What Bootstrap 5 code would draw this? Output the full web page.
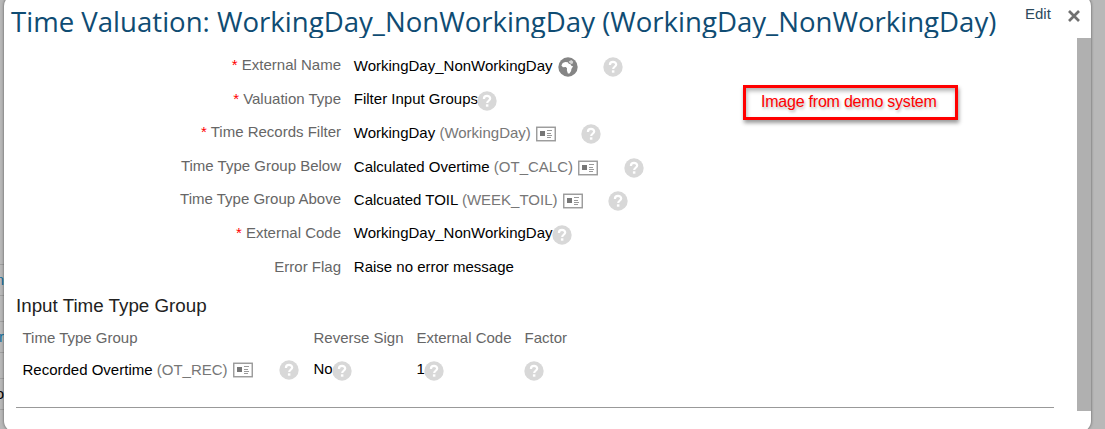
<!DOCTYPE html>
<html lang="en">
<head>
  <meta charset="UTF-8">
  <meta name="viewport" content="width=device-width, initial-scale=1">
  <title>Time Valuation</title>
  <link href="https://cdn.jsdelivr.net/npm/bootstrap@5.3.0/dist/css/bootstrap.min.css" rel="stylesheet">
  <style>
    body {
      background-color: #b8b8b8;
      font-family: "Liberation Sans", Arial, sans-serif;
      font-size: 15px;
      line-height: 20px;
      color: #000;
      height: 429px;
      overflow: hidden;
    }
    .page-behind {
      width: 4px;
      padding-top: 264px;
      overflow: hidden;
      line-height: 30px;
    }
    .page-behind div {
      height: 31px;
      border-top: 1px solid #a0a0a0;
      direction: rtl;
      white-space: nowrap;
    }
    .page-behind .gap-row {
      height: 26px;
    }
    .dialog-box {
      width: 1087px;
      height: 437px;
      margin-top: -5px;
      padding-top: 5px;
      background: #fff;
      border-radius: 11px;
      box-shadow: 0 0 3px rgba(0, 0, 0, 0.55);
    }
    .dialog-head {
      height: 38px;
    }
    .dialog-title {
      width: 1015px;
      height: 38px;
      padding-left: 7px;
      overflow: hidden;
      white-space: nowrap;
      font-family: "Open Sans", sans-serif;
      font-size: 27.58px;
      font-weight: 400;
      line-height: 44px;
      color: #0f4c73;
    }
    .edit-link {
      width: 26px;
      margin: 4px 17px 0 6px;
      color: #2c4a5c;
    }
    .close-x {
      margin-top: 10px;
    }
    .dialog-body {
      height: 373px;
    }
    .track {
      width: 14px;
      background: #b0b0b0;
    }
    .field-list {
      padding-top: 17px;
    }
    .field-row {
      height: 33.6px;
      white-space: nowrap;
    }
    .field-label {
      width: 337px;
      margin-right: 12.8px;
      color: #666;
    }
    .field-value {
      padding-top: 1px;
    }
    .req {
      color: #f00;
    }
    .code {
      color: #777;
    }
    .help-icon {
      margin: 2px 0 0 -1px;
    }
    .globe-icon {
      margin: 2px 0 0 5px;
    }
    .help-far {
      margin: 2px 0 0 25.5px;
    }
    .card-link {
      margin: 4px 0 0 5px;
    }
    .section-title {
      margin: 4px 0 0 12px;
      font-size: 18.8px;
      font-weight: 400;
      line-height: 24px;
      color: #222;
    }
    .group-table {
      width: 580px;
      margin: 9px 0 0 18.5px;
    }
    .group-table th {
      height: 22px;
      padding: 0;
      font-weight: 400;
      color: #666;
    }
    .group-table td {
      height: 42px;
      padding: 0;
    }
    .bottom-line {
      width: 1038px;
      margin: 16px 0 0 12px;
      border-top: 1px solid #999;
    }
    .note-box {
      position: absolute;
      left: 743px;
      top: 85px;
      width: 215px;
      height: 35px;
      padding: 4px 0 0 15px;
      border: 3px solid #f00;
      box-shadow: 1px 3px 4px rgba(0, 0, 0, 0.4), inset 1px 3px 4px rgba(0, 0, 0, 0.3);
      color: #f00;
      font-size: 16px;
      letter-spacing: -0.22px;
      line-height: 20px;
      white-space: nowrap;
      text-shadow: 1px 2px 3px rgba(0, 0, 0, 0.3);
    }
    svg {
      display: block;
      flex: none;
    }
  </style>
</head>
<body>

  <!-- shared icons -->
  <svg width="0" height="0" class="position-absolute">
    <symbol id="help" viewBox="0 0 20 20">
      <circle cx="10" cy="10" r="9.7" fill="#d8d8d8"/>
      <path d="M6.9 7.9C6.9 5.8 8.2 4.8 10 4.8s3.2 1 3.2 2.7c0 2.2-3 2.3-3 4.5" fill="none" stroke="#fff" stroke-width="2.2"/>
      <rect x="8.9" y="13.3" width="2.5" height="2.4" fill="#fff"/>
    </symbol>
    <symbol id="card-icon" viewBox="0 0 20 16">
      <rect x=".75" y="1.25" width="18.5" height="13.5" fill="#fff" stroke="#999" stroke-width="1.4"/>
      <rect x="4" y="5" width="5" height="5" fill="#777"/>
      <path d="M11 4.5h5M11 7.5h4M11 9.5h5M11 11.5h4" stroke="#999" stroke-width="1"/>
    </symbol>
    <symbol id="globe" viewBox="0 0 20 20">
      <circle cx="10" cy="10" r="9.7" fill="#858585"/>
      <path d="M3.4 8.6L4.7 6l2.6-1.1 2.5.4 1 1.5 1.7.5 1.1 1.8 1.5.2-1.7 2.6-.3 2.2-1.6 2.4-1.6.1-1-3 .1-2.4-1.2-1.1-2.9.1z" fill="#fff"/>
      <path d="M10.7 4.4l2.6-1.3 1.9 1.3-.4 2.1-1.7.4-1.6-1.2z" fill="#d5d5d5"/>
    </symbol>
  </svg>

  <div class="d-flex">
    <div class="page-behind">
      <div style="color: #14709e">n</div>
      <div class="gap-row"></div>
      <div style="color: #14709e">r</div>
      <div class="gap-row"></div>
      <div>o</div>
      <div></div>
    </div>

    <div class="dialog-box">
      <div class="dialog-head d-flex align-items-start">
        <h1 class="dialog-title mb-0">Time Valuation: WorkingDay_NonWorkingDay (WorkingDay_NonWorkingDay)</h1>
        <a class="edit-link text-decoration-none" href="#">Edit</a>
        <svg class="close-x" width="12" height="12" viewBox="0 0 12 12"><path d="M1 1l10 10M11 1L1 11" stroke="#707070" stroke-width="2.7"/></svg>
      </div>

      <div class="dialog-body d-flex justify-content-between">
        <div>
          <div class="field-list">
            <div class="field-row d-flex">
              <div class="field-label text-end"><span class="req">*</span> External Name</div>
              <div class="field-value">WorkingDay_NonWorkingDay</div>
              <svg width="20" height="20" class="globe-icon"><use href="#globe"/></svg>
              <svg width="20" height="20" class="help-far"><use href="#help"/></svg>
            </div>
            <div class="field-row d-flex">
              <div class="field-label text-end"><span class="req">*</span> Valuation Type</div>
              <div>Filter Input Groups</div>
              <svg width="20" height="20" class="help-icon"><use href="#help"/></svg>
            </div>
            <div class="field-row d-flex">
              <div class="field-label text-end"><span class="req">*</span> Time Records Filter</div>
              <div class="field-value">WorkingDay <span class="code">(WorkingDay)</span></div>
              <svg width="20" height="16" class="card-link"><use href="#card-icon"/></svg>
              <svg width="20" height="20" class="help-far"><use href="#help"/></svg>
            </div>
            <div class="field-row d-flex">
              <div class="field-label text-end">Time Type Group Below</div>
              <div class="field-value">Calculated Overtime <span class="code">(OT_CALC)</span></div>
              <svg width="20" height="16" class="card-link"><use href="#card-icon"/></svg>
              <svg width="20" height="20" class="help-far"><use href="#help"/></svg>
            </div>
            <div class="field-row d-flex">
              <div class="field-label text-end">Time Type Group Above</div>
              <div class="field-value">Calcuated TOIL <span class="code">(WEEK_TOIL)</span></div>
              <svg width="20" height="16" class="card-link"><use href="#card-icon"/></svg>
              <svg width="20" height="20" class="help-far"><use href="#help"/></svg>
            </div>
            <div class="field-row d-flex">
              <div class="field-label text-end"><span class="req">*</span> External Code</div>
              <div>WorkingDay_NonWorkingDay</div>
              <svg width="20" height="20" class="help-icon"><use href="#help"/></svg>
            </div>
            <div class="field-row d-flex">
              <div class="field-label text-end">Error Flag</div>
              <div>Raise no error message</div>
            </div>
          </div>

          <h2 class="section-title">Input Time Type Group</h2>
          <table class="group-table">
            <colgroup><col style="width: 291px"><col style="width: 103px"><col style="width: 108px"><col></colgroup>
            <thead>
              <tr><th>Time Type Group</th><th>Reverse Sign</th><th>External Code</th><th>Factor</th></tr>
            </thead>
            <tbody>
              <tr>
                <td>
                  <div class="d-flex align-items-center">
                    <div>Recorded Overtime <span class="code">(OT_REC)</span></div>
                    <svg width="20" height="16" style="margin-left: 5px"><use href="#card-icon"/></svg>
                    <svg width="20" height="20" style="margin-left: 26px"><use href="#help"/></svg>
                  </div>
                </td>
                <td><div class="d-flex">No<svg width="20" height="20" class="help-icon"><use href="#help"/></svg></div></td>
                <td><div class="d-flex">1<svg width="20" height="20" class="help-icon"><use href="#help"/></svg></div></td>
                <td><svg width="20" height="20" class="help-icon"><use href="#help"/></svg></td>
              </tr>
            </tbody>
          </table>
          <div class="bottom-line"></div>
        </div>
        <div class="track"></div>
      </div>
    </div>
  </div>

  <!-- annotation over the dialog -->
  <div class="note-box">Image from demo system</div>

  <script src="https://cdn.jsdelivr.net/npm/bootstrap@5.3.0/dist/js/bootstrap.bundle.min.js"></script>
</body>
</html>
